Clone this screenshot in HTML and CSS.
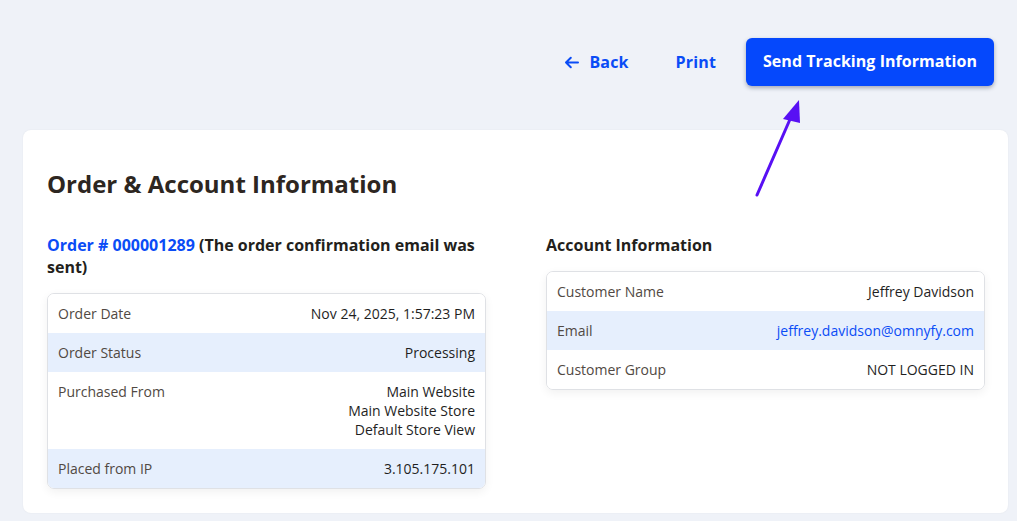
FILE: index.html
```html
<!DOCTYPE html>
<html lang="en">
<head>
<meta charset="utf-8">
<title>Order &amp; Account Information</title>
<link rel="stylesheet" href="styles.css">
</head>
<body>
<div class="page">
  <header class="actions">
    <a class="link-btn back" href="#">
      <svg class="back-icon" width="15" height="13" viewBox="0 0 15 13" aria-hidden="true"><path d="M14 6.5H2M6.8 1.7L2 6.5l4.8 4.8" fill="none" stroke="currentColor" stroke-width="2" stroke-linecap="round" stroke-linejoin="round"/></svg>
      <span>Back</span>
    </a>
    <a class="link-btn print" href="#">Print</a>
    <button class="primary-btn" type="button">Send Tracking Information</button>
  </header>

  <section class="card">
    <h1 class="card-title">Order &amp; Account Information</h1>
    <div class="columns">
      <div class="col">
        <h2 class="col-title"><a class="order-link" href="#">Order # 000001289</a> (The order confirmation email was sent)</h2>
        <div class="info-table">
          <div class="row"><div class="label">Order Date</div><div class="value">Nov 24, 2025, 1:57:23 PM</div></div>
          <div class="row alt"><div class="label">Order Status</div><div class="value">Processing</div></div>
          <div class="row"><div class="label">Purchased From</div><div class="value">Main Website<br>Main Website Store<br>Default Store View</div></div>
          <div class="row alt"><div class="label">Placed from IP</div><div class="value">3.105.175.101</div></div>
        </div>
      </div>
      <div class="col">
        <h2 class="col-title">Account Information</h2>
        <div class="info-table">
          <div class="row"><div class="label">Customer Name</div><div class="value">Jeffrey Davidson</div></div>
          <div class="row alt"><div class="label">Email</div><div class="value"><a class="email" href="#">jeffrey.davidson@omnyfy.com</a></div></div>
          <div class="row"><div class="label">Customer Group</div><div class="value">NOT LOGGED IN</div></div>
        </div>
      </div>
    </div>
  </section>

  <svg class="annotation" width="60" height="110" viewBox="0 0 60 110" aria-hidden="true">
    <line x1="12" y1="100" x2="46" y2="22" stroke="#5810f4" stroke-width="3" stroke-linecap="round"/>
    <polygon points="54,5 55,28 38,24" fill="#5810f4"/>
  </svg>
</div>
</body>
</html>
```

FILE: styles.css
```css
* { box-sizing: border-box; }

html, body {
  margin: 0;
  padding: 0;
}

body {
  background: #eff2f8;
  font-family: "Open Sans", "Noto Sans", Arial, sans-serif;
  color: #303030;
  width: 1017px;
  height: 521px;
  overflow: hidden;
}

.page {
  position: relative;
  padding: 38px 9px 0 23px;
}

.actions {
  display: flex;
  justify-content: flex-end;
  align-items: center;
  height: 48px;
  padding-right: 14px;
}

.link-btn {
  display: flex;
  align-items: center;
  gap: 10px;
  color: #0a4cf6;
  text-decoration: none;
  font-size: 16px;
  font-weight: 700;
  letter-spacing: 0.15px;
}

.back { margin-right: 47px; }
.print { margin-right: 30px; }

.back-icon { display: block; }

.primary-btn {
  height: 48px;
  width: 248px;
  border: none;
  border-radius: 6px;
  background: #0548fc;
  color: #ffffff;
  font-family: inherit;
  font-size: 16px;
  font-weight: 700;
  letter-spacing: 0.05px;
  padding: 0 0 2px;
  box-shadow: 0 2px 4px rgba(20, 30, 60, 0.35);
  cursor: pointer;
}

.card {
  margin-top: 44px;
  background: #ffffff;
  border-radius: 8px;
  padding: 38px 23px 24px 24px;
  width: 985px;
  box-shadow: 0 0 2px rgba(0, 0, 0, 0.06);
}

.card-title {
  margin: 0;
  font-size: 24px;
  line-height: 32px;
  font-weight: 700;
  color: #2d2621;
}

.columns {
  display: grid;
  grid-template-columns: 439px 439px;
  column-gap: 60px;
  margin-top: 34px;
  align-items: start;
}

.col-title {
  margin: 0 0 15px;
  font-size: 16px;
  line-height: 22px;
  font-weight: 700;
  color: #231f1c;
}

.order-link {
  color: #0a4cf6;
  text-decoration: none;
}

.info-table {
  border: 1px solid #dfe1e5;
  border-radius: 7px;
  overflow: hidden;
  box-shadow: 0 3px 10px rgba(0, 0, 0, 0.06);
  font-size: 14px;
  line-height: 19px;
}

.row {
  display: flex;
  justify-content: space-between;
  align-items: flex-start;
  padding: 10px 10px 10px 10px;
  background: #ffffff;
}

.row.alt { background: #e6effd; }

.label { color: #514943; }

.value {
  text-align: right;
  color: #1f1f1f;
}

.email {
  color: #0a4cf6;
  text-decoration: none;
}

.annotation {
  position: absolute;
  left: 745px;
  top: 95px;
}
```
